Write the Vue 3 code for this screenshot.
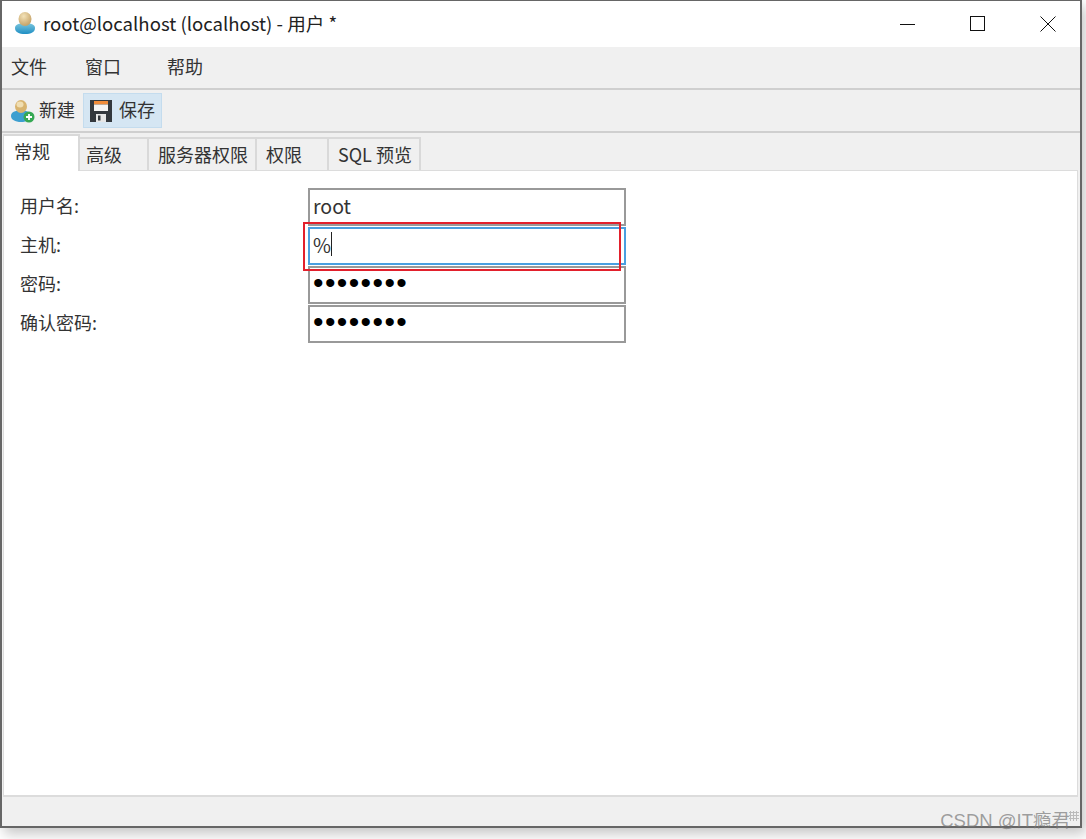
<template>
  <div class="page">
    <div class="window">
      <header class="titlebar">
        <svg class="title-icon" width="22" height="24" viewBox="0 0 22 24">
          <defs>
            <linearGradient id="body" x1="0" y1="0" x2="0" y2="1">
              <stop offset="0" stop-color="#7cc6dd" />
              <stop offset="1" stop-color="#1f8fc4" />
            </linearGradient>
            <radialGradient id="head" cx="0.4" cy="0.3" r="0.8">
              <stop offset="0" stop-color="#f3e2b8" />
              <stop offset="1" stop-color="#bf9a5c" />
            </radialGradient>
          </defs>
          <path d="M1 17C1 13.5 5 12 11 12S21 13.5 21 17C21 21 17 23 11 23S1 21 1 17Z" fill="url(#body)" />
          <ellipse cx="11" cy="8" rx="6.5" ry="7" fill="url(#head)" />
        </svg>
        <span class="title-text">root@localhost (localhost) - 用户 *</span>
        <div class="win-controls">
          <svg width="16" height="16" viewBox="0 0 16 16"><path d="M0 8.5H15" stroke="#111" fill="none" /></svg>
          <svg width="16" height="16" viewBox="0 0 16 16"><rect x="0.5" y="0.5" width="14" height="14" stroke="#111" fill="none" /></svg>
          <svg width="16" height="16" viewBox="0 0 16 16"><path d="M0.5 0.5L15.5 15.5M15.5 0.5L0.5 15.5" stroke="#111" fill="none" /></svg>
        </div>
      </header>

      <nav class="menubar">
        <span v-for="m in menus" :key="m.label" class="menu-item" :style="{ width: m.width + 'px' }">{{ m.label }}</span>
      </nav>

      <div class="toolbar">
        <button class="tool">
          <svg width="24" height="24" viewBox="0 0 24 24">
            <path d="M0 17C0 13 4 11.5 10 11.5S20 13 20 17C20 20.5 16 23 10 23S0 20.5 0 17Z" fill="#3d9fd0" />
            <ellipse cx="10" cy="7.5" rx="6" ry="6.5" fill="#d8b470" />
            <ellipse cx="9" cy="5.5" rx="3.5" ry="3" fill="#f0deb2" />
            <circle cx="18" cy="18" r="5.5" fill="#35a853" />
            <path d="M18 15V21M15 18H21" stroke="#fff" stroke-width="1.8" />
          </svg>
          <span>新建</span>
        </button>
        <button class="tool active">
          <svg width="22" height="22" viewBox="0 0 22 22">
            <path d="M0 0H22V22H0Z" fill="#33383d" />
            <rect x="4" y="1" width="14" height="3.5" fill="#f08c3a" />
            <rect x="4" y="4.5" width="14" height="6.5" fill="#f4f4f4" />
            <rect x="6" y="14" width="10" height="8" fill="#e6e6e6" />
            <rect x="8" y="15.5" width="2.5" height="5" fill="#33383d" />
          </svg>
          <span>保存</span>
        </button>
      </div>

      <div class="tabs">
        <span
          v-for="(t, i) in tabs"
          :key="t.label"
          class="tab"
          :class="{ selected: i === 0 }"
          :style="{ width: t.width + 'px', paddingLeft: t.pad + 'px' }"
        >{{ t.label }}</span>
      </div>

      <main class="panel">
        <div v-for="f in fields" :key="f.label" class="field">
          <label class="field-label">{{ f.label }}</label>
          <div class="input" :class="{ focused: f.focused, secret: f.secret }">
            {{ f.value }}<i v-if="f.focused" class="caret"></i>
          </div>
        </div>
      </main>

      <footer class="statusbar"></footer>
      <div class="highlight"></div>
      <div class="grip"></div>
    </div>
    <div class="watermark">CSDN @IT瘾君</div>
  </div>
</template>

<script setup>
const menus = [
  { label: '文件', width: 74 },
  { label: '窗口', width: 82 },
  { label: '帮助', width: 60 }
]

const tabs = [
  { label: '常规', width: 77, pad: 10 },
  { label: '高级', width: 69, pad: 6 },
  { label: '服务器权限', width: 108, pad: 9 },
  { label: '权限', width: 72, pad: 9 },
  { label: 'SQL 预览', width: 92, pad: 9 }
]

const dots = '••••••••'

const fields = [
  { label: '用户名:', value: 'root' },
  { label: '主机:', value: '%', focused: true },
  { label: '密码:', value: dots, secret: true },
  { label: '确认密码:', value: dots, secret: true }
]
</script>

<style>
html,
body {
  background: #fff;
}
</style>

<style scoped>
.page {
  position: relative;
  width: 1086px;
  height: 839px;
  overflow: hidden;
  background: #fff;
  font-family: "Noto Sans CJK SC", "Noto Sans", sans-serif;
  color: #333;
}

.window {
  position: relative;
  display: flex;
  flex-direction: column;
  box-sizing: border-box;
  width: 1082px;
  height: 828px;
  border: 1px solid #666;
  border-width: 1px 2px 2px 2px;
  background: #f0f0f0;
  box-shadow: 4px 6px 12px rgba(0, 0, 0, 0.22);
}

.titlebar {
  display: flex;
  align-items: center;
  flex: none;
  height: 46px;
  padding-left: 12px;
  background: #fff;
}

.title-icon {
  margin-top: -3px;
}

.title-text {
  margin-left: 7px;
  margin-top: -4px;
  font-size: 18.6px;
  color: #222;
}

.win-controls {
  display: flex;
  gap: 54px;
  margin-left: auto;
  margin-right: 24px;
}

.menubar {
  display: flex;
  align-items: center;
  flex: none;
  height: 43px;
  padding-left: 9px;
  padding-bottom: 3px;
  box-sizing: border-box;
  font-size: 18px;
  border-bottom: 2px solid #cfcfcf;
}

.menu-item {
  display: block;
}

.toolbar {
  display: flex;
  align-items: center;
  flex: none;
  gap: 3px;
  height: 41px;
  padding-left: 7px;
  border-bottom: 2px solid #cfcfcf;
}

.tool {
  display: flex;
  align-items: center;
  gap: 4px;
  height: 35px;
  padding: 0 4px 0 1px;
  border: 1px solid transparent;
  background: none;
  font: inherit;
  font-size: 18px;
  color: #333;
}

.tool span {
  margin-top: -3px;
}

.tool.active {
  gap: 7px;
  padding: 0 6px;
  background: #d5e6f3;
  border-color: #c4dcee;
}

.tabs {
  display: flex;
  align-items: flex-end;
  flex: none;
  height: 37px;
  padding-left: 1px;
}

.tab {
  display: flex;
  align-items: center;
  box-sizing: border-box;
  height: 33px;
  padding-bottom: 2px;
  font-size: 18px;
  background: #f0f0f0;
  border: 2px solid #d9d9d9;
  border-width: 2px 2px 0 0;
}

.tab.selected {
  height: 37px;
  margin-bottom: -1px;
  padding-bottom: 5px;
  background: #fff;
  border-left: 1px solid #d9d9d9;
  position: relative;
  z-index: 1;
}

.panel {
  flex: 1;
  padding-top: 16px;
  background: #fff;
  margin: 0 2px 0 1px;
  border: 2px solid #dcdcdc;
  border-width: 1px 1px 2px 1px;
}

.field {
  display: flex;
  align-items: center;
  height: 39px;
}

.field-label {
  width: 302px;
  padding-left: 16px;
  padding-bottom: 4px;
  font-size: 18px;
  flex: none;
  box-sizing: border-box;
}

.input {
  display: flex;
  align-items: center;
  box-sizing: border-box;
  width: 318px;
  height: 38px;
  margin-left: 2px;
  padding: 0 3px 3px;
  border: 2px solid #999;
  font-size: 19.5px;
  color: #333;
}

.input.focused {
  border: 2px solid #4a9fe0;
}

.input.secret {
  color: #000;
  font-size: 30px;
  letter-spacing: 1.4px;
  font-family: "Liberation Sans", sans-serif;
}

.caret {
  display: block;
  width: 1px;
  height: 24px;
  background: #222;
}

.statusbar {
  flex: none;
  height: 29px;
}

.highlight {
  position: absolute;
  left: 301px;
  top: 221px;
  width: 318px;
  height: 49px;
  box-sizing: border-box;
  border: 2px solid #e2202c;
}

.grip {
  position: absolute;
  right: 1px;
  bottom: 5px;
  width: 10px;
  height: 10px;
  background-image: radial-gradient(circle, #bbb 1px, transparent 1.2px);
  background-size: 3px 3px;
}

.watermark {
  position: absolute;
  right: 16px;
  top: 806px;
  font-size: 18.5px;
  color: rgba(120, 120, 120, 0.7);
  font-family: "Liberation Sans", "Noto Sans CJK SC", sans-serif;
}
</style>
